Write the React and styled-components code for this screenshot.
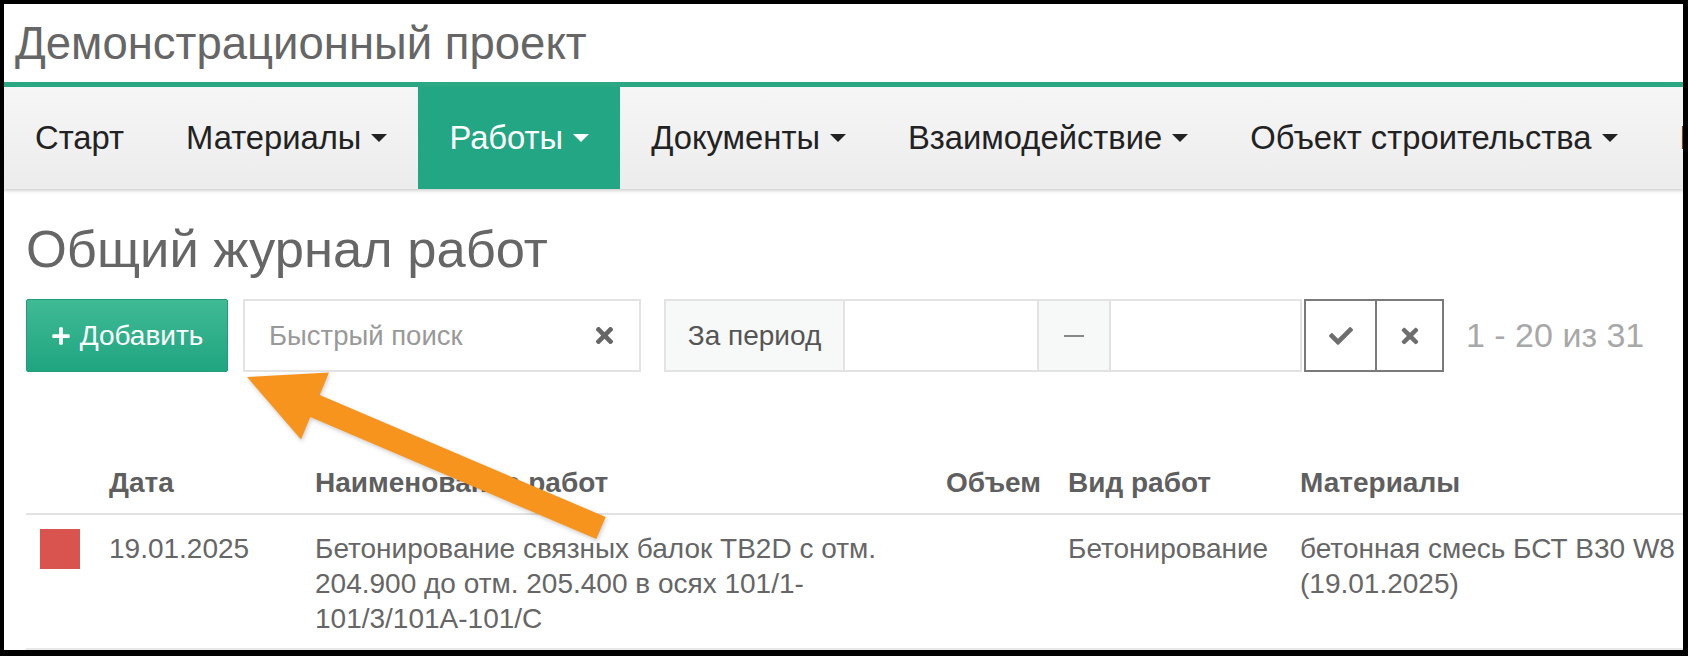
import React from 'react';
import styled, { createGlobalStyle } from 'styled-components';
import { FaPlus, FaTimes, FaCheck } from 'react-icons/fa';

const GlobalStyle = createGlobalStyle`
  html, body {
    margin: 0;
    padding: 0;
    background: #fff;
  }
  body {
    font-family: 'Liberation Sans', Arial, sans-serif;
  }
  * {
    box-sizing: border-box;
  }
`;

const Frame = styled.div`
  position: relative;
  width: 1688px;
  height: 656px;
  overflow: hidden;
  background: #fff;
  border-style: solid;
  border-color: #000;
  border-width: 4px 5px 6px 4px;
`;

const Header = styled.div`
  height: 83px;
  display: flex;
  align-items: center;
  padding-left: 11px;
  padding-top: 2px;
  font-size: 45.5px;
  color: #666;
  border-bottom: 5px solid #2aa884;
`;

const Nav = styled.nav`
  display: flex;
  height: 102px;
  background: linear-gradient(#f6f6f6, #ececec);
  box-shadow: 0 2px 3px rgba(0, 0, 0, 0.18);
  white-space: nowrap;
`;

const NavItem = styled.div`
  display: flex;
  align-items: center;
  flex-shrink: 0;
  padding: 0 31px;
  font-size: 32.75px;
  color: ${(p) => (p.$active ? '#fff' : '#222')};
  background: ${(p) => (p.$active ? '#22a683' : 'transparent')};
`;

const Caret = styled.span`
  display: inline-block;
  margin-left: 10px;
  border-top: 8px solid currentColor;
  border-left: 8px solid transparent;
  border-right: 8px solid transparent;
`;

const Content = styled.div`
  padding: 30px 0 0 22px;
`;

const Heading = styled.h1`
  margin: 0;
  font-size: 52.5px;
  line-height: 60px;
  font-weight: 400;
  color: #666;
`;

const Toolbar = styled.div`
  display: flex;
  align-items: center;
  height: 73px;
  margin-top: 20px;
`;

const AddButton = styled.div`
  display: flex;
  align-items: center;
  justify-content: center;
  gap: 9px;
  width: 202px;
  height: 100%;
  color: #fff;
  font-size: 28px;
  background: linear-gradient(#3fba95, #1fa580);
  border: 1px solid #1f9c7a;
  border-radius: 2px;
`;

const SearchBox = styled.div`
  display: flex;
  align-items: center;
  justify-content: space-between;
  width: 398px;
  height: 100%;
  margin-left: 15px;
  padding: 0 22px 0 24px;
  border: 2px solid #e3e3e3;
  font-size: 27.5px;
  color: #999;
`;

const ClearIcon = styled(FaTimes)`
  color: #666;
  font-size: 25px;
`;

const PeriodGroup = styled.div`
  display: flex;
  height: 100%;
  margin-left: 23px;
  border: 2px solid #e3e3e3;
`;

const Addon = styled.div`
  display: flex;
  align-items: center;
  justify-content: center;
  width: ${(p) => p.$w}px;
  background: #f7f8f8;
  color: #555;
  font-size: 28px;
  border-right: 2px solid #e3e3e3;
`;

const DateInput = styled.div`
  width: ${(p) => p.$w}px;
  background: #fff;
  border-right: ${(p) => (p.$last ? 'none' : '2px solid #e3e3e3')};
`;

const Dash = styled.span`
  display: block;
  width: 20px;
  height: 2px;
  background: #888;
`;

const IconButton = styled.div`
  display: flex;
  align-items: center;
  justify-content: center;
  width: ${(p) => p.$w}px;
  height: 100%;
  color: #6e6e6e;
  font-size: 24px;
  border: 2px solid #7a7a7a;
  margin-left: ${(p) => (p.$joined ? '-2px' : '2px')};
`;

const Pager = styled.div`
  margin-left: 22px;
  font-size: 34px;
  color: #a8a8a8;
  white-space: nowrap;
`;

const Table = styled.table`
  margin-top: 80px;
  width: 1700px;
  border-collapse: collapse;
  table-layout: fixed;
  color: #666;
  font-size: 28px;
`;

const Th = styled.th`
  height: 62px;
  padding: 0 14px;
  text-align: ${(p) => (p.$right ? 'right' : 'left')};
  font-weight: 700;
  color: #5f5f5f;
  border-bottom: 2px solid #e2e2e2;
  white-space: nowrap;
`;

const Td = styled.td`
  padding: 16px 14px 12px;
  line-height: 35px;
  vertical-align: top;
  border-bottom: 2px solid #e8e8e8;
  white-space: ${(p) => (p.$nowrap ? 'nowrap' : 'normal')};
`;

const StatusSquare = styled.div`
  width: 40px;
  height: 40px;
  margin-top: -2px;
  background: #d9534f;
`;

const Arrow = styled.svg`
  position: absolute;
  left: -4px;
  top: -4px;
  pointer-events: none;
  filter: drop-shadow(1px 2px 2px rgba(0, 0, 0, 0.2));
`;

const navItems = [
  { label: 'Старт' },
  { label: 'Материалы', menu: true },
  { label: 'Работы', menu: true, active: true },
  { label: 'Документы', menu: true },
  { label: 'Взаимодействие', menu: true },
  { label: 'Объект строительства', menu: true },
  { label: 'Настройки', menu: true },
];

export default function App() {
  return (
    <>
      <GlobalStyle />
      <Frame>
        <Header>Демонстрационный проект</Header>
        <Nav>
          {navItems.map((item) => (
            <NavItem key={item.label} $active={item.active}>
              {item.label}
              {item.menu && <Caret />}
            </NavItem>
          ))}
        </Nav>
        <Content>
          <Heading>Общий журнал работ</Heading>
          <Toolbar>
            <AddButton>
              <FaPlus size={20} />
              Добавить
            </AddButton>
            <SearchBox>
              Быстрый поиск
              <ClearIcon />
            </SearchBox>
            <PeriodGroup>
              <Addon $w={179}>За период</Addon>
              <DateInput $w={194} />
              <Addon $w={72}>
                <Dash />
              </Addon>
              <DateInput $w={189} $last />
            </PeriodGroup>
            <IconButton $w={73}>
              <FaCheck />
            </IconButton>
            <IconButton $w={69} $joined>
              <FaTimes />
            </IconButton>
            <Pager>1 - 20 из 31</Pager>
          </Toolbar>
          <Table>
            <colgroup>
              <col style={{ width: 69 }} />
              <col style={{ width: 206 }} />
              <col style={{ width: 631 }} />
              <col style={{ width: 122 }} />
              <col style={{ width: 232 }} />
              <col />
            </colgroup>
            <thead>
              <tr>
                <Th />
                <Th>Дата</Th>
                <Th>Наименование работ</Th>
                <Th $right>Объем</Th>
                <Th>Вид работ</Th>
                <Th>Материалы</Th>
              </tr>
            </thead>
            <tbody>
              <tr>
                <Td>
                  <StatusSquare />
                </Td>
                <Td $nowrap>19.01.2025</Td>
                <Td>
                  Бетонирование связных балок ТВ2D с отм. 204.900 до отм. 205.400 в осях 101/1-<wbr />101/3/101A-101/C
                </Td>
                <Td />
                <Td $nowrap>Бетонирование</Td>
                <Td $nowrap>
                  бетонная смесь БСТ В30 W8
                  <br />
                  (19.01.2025)
                </Td>
              </tr>
            </tbody>
          </Table>
        </Content>
        <Arrow width="1688" height="656" viewBox="0 0 1688 656">
          <polygon
            fill="#f7941d"
            points="247,377 329,372.5 319.7,395 605.7,517 596.3,539 310.3,417 301,439.5"
          />
        </Arrow>
      </Frame>
    </>
  );
}
